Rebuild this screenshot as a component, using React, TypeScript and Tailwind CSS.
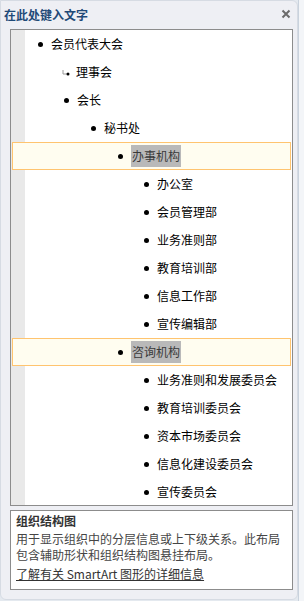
import React from 'react';

type Node = { label: string; level: number; arrow?: boolean; active?: boolean };

const nodes: Node[] = [
    { label: '会员代表大会', level: 1 },
    { label: '理事会', level: 2, arrow: true },
    { label: '会长', level: 2 },
    { label: '秘书处', level: 3 },
    { label: '办事机构', level: 4, active: true },
    { label: '办公室', level: 5 },
    { label: '会员管理部', level: 5 },
    { label: '业务准则部', level: 5 },
    { label: '教育培训部', level: 5 },
    { label: '信息工作部', level: 5 },
    { label: '宣传编辑部', level: 5 },
    { label: '咨询机构', level: 4, active: true },
    { label: '业务准则和发展委员会', level: 5 },
    { label: '教育培训委员会', level: 5 },
    { label: '资本市场委员会', level: 5 },
    { label: '信息化建设委员会', level: 5 },
    { label: '宣传委员会', level: 5 },
];

// left padding of each level, in px from the pane's inner edge
const indent: Record<number, string> = {
    1: 'pl-[27px]',
    2: 'pl-[53px]',
    3: 'pl-[80px]',
    4: 'pl-[107px]',
    5: 'pl-[133px]',
};

const activeIndent: Record<number, string> = {
    4: 'pl-[105px]',
};

function Bullet({ arrow }: { arrow?: boolean }) {
    if (arrow) {
        return (
            <svg width="8" height="8" viewBox="0 0 8 8" className="mr-[6px] -ml-[2px] shrink-0">
                <path d="M1 2 V6 H6" fill="none" stroke="#9a9a9a" strokeWidth="1" />
                <circle cx="6" cy="6" r="1.5" fill="#000" />
            </svg>
        );
    }
    return <span className="w-[5px] h-[5px] rounded-full bg-black mr-[8px] shrink-0" />;
}

function Row({ node }: { node: Node }) {
    if (node.active) {
        return (
            <div className={`h-[28px] mx-[1px] border border-[#ffc46f] bg-[#fffdf0] flex items-center ${activeIndent[node.level]}`}>
                <Bullet />
                <span className="bg-[#b9b9b9] text-[#3a3a3a] leading-[22px] px-[1px]">{node.label}</span>
            </div>
        );
    }
    return (
        <div className={`h-[28px] flex items-center ${indent[node.level]}`}>
            <Bullet arrow={node.arrow} />
            <span className="text-black leading-[20px]">{node.label}</span>
        </div>
    );
}

export default function App() {
    return (
        <div className="w-[304px] h-[601px] flex bg-[#e4e9ef] text-[12px] font-['Microsoft_YaHei','Noto_Sans_CJK_SC',sans-serif]">
            <div className="w-[298px] h-[600px] bg-[#eeeff4] border border-[#d6dbe3] rounded-tr-[6px] rounded-b-[6px] flex flex-col pl-[9px] pr-[4px]">
                <div className="h-[28px] flex items-center justify-between -ml-[6px] pr-[2px]">
                    <span className="font-bold text-[#1f4a78] text-[12px] leading-[16px]">在此处键入文字</span>
                    <svg width="10" height="10" viewBox="0 0 10 10" className="mb-[2px]">
                        <path d="M1.5 1.5 L8.5 8.5 M8.5 1.5 L1.5 8.5" stroke="#6b6b6b" strokeWidth="2" />
                    </svg>
                </div>

                <div className="h-[477px] border border-[#8c8c8c] overflow-hidden bg-[linear-gradient(to_right,#e9e9e9_14px,#ffffff_14px)]">
                    {nodes.map((n) => (
                        <Row key={n.label} node={n} />
                    ))}
                </div>

                <div className="mt-[4px] h-[80px] border border-[#8c8c8c] bg-white px-[5px] pt-[1px] text-[#454545]">
                    <div className="font-bold text-[#333] leading-[18px]">组织结构图</div>
                    <p className="leading-[16px] mt-[1px]">
                        用于显示组织中的分层信息或上下级关系。此布局
                        <br />
                        包含辅助形状和组织结构图悬挂布局。
                    </p>
                    <a className="block mt-[3px] leading-[16px] underline text-[#333]">了解有关 SmartArt 图形的详细信息</a>
                </div>
            </div>
            <div className="flex-1 border-l border-[#c9d2dd] bg-[#f3f5f8]" />
        </div>
    );
}
